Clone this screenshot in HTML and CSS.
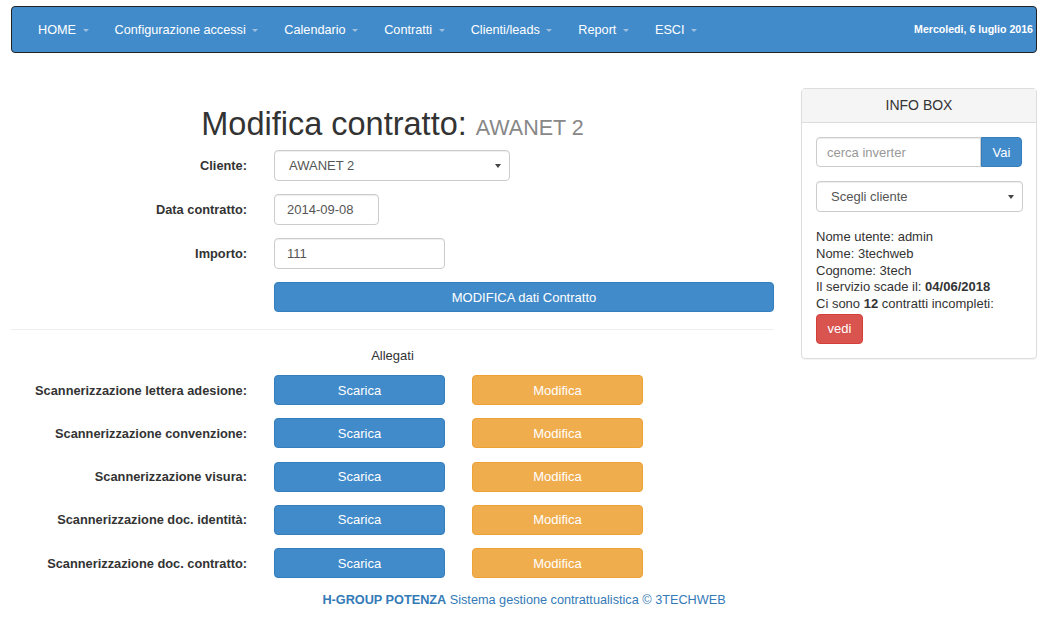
FILE: index.html
```html
<!DOCTYPE html>
<html lang="it">
<head>
<meta charset="utf-8">
<title>Modifica contratto</title>
<link rel="stylesheet" href="styles.css">
</head>
<body>
<nav class="navbar">
  <ul class="nav">
    <li><a href="#">HOME <span class="caret"></span></a></li>
    <li><a href="#">Configurazione accessi <span class="caret"></span></a></li>
    <li><a href="#">Calendario <span class="caret"></span></a></li>
    <li><a href="#">Contratti <span class="caret"></span></a></li>
    <li><a href="#">Clienti/leads <span class="caret"></span></a></li>
    <li><a href="#">Report <span class="caret"></span></a></li>
    <li><a href="#">ESCI <span class="caret"></span></a></li>
  </ul>
  <div class="date">Mercoledi, 6 luglio 2016</div>
</nav>

<div class="page">
  <main class="main">
    <h1 class="title">Modifica contratto: <small>AWANET 2</small></h1>
    <form class="form">
      <div class="row">
        <label class="lbl">Cliente:</label>
        <div class="ctl"><div class="select w-client">AWANET 2<span class="arrow"></span></div></div>
      </div>
      <div class="row">
        <label class="lbl">Data contratto:</label>
        <div class="ctl"><div class="input w-date">2014-09-08</div></div>
      </div>
      <div class="row">
        <label class="lbl">Importo:</label>
        <div class="ctl"><div class="input w-imp">111</div></div>
      </div>
      <div class="row">
        <div class="lbl"></div>
        <div class="ctl"><button type="button" class="btn btn-primary w-full">MODIFICA dati Contratto</button></div>
      </div>
    </form>
    <hr class="sep">
    <div class="allegati">Allegati</div>
    <div class="att">
      <div class="arow"><span class="lbl">Scannerizzazione lettera adesione:</span><button class="btn btn-primary w-att">Scarica</button><button class="btn btn-warning w-att">Modifica</button></div>
      <div class="arow"><span class="lbl">Scannerizzazione convenzione:</span><button class="btn btn-primary w-att">Scarica</button><button class="btn btn-warning w-att">Modifica</button></div>
      <div class="arow"><span class="lbl">Scannerizzazione visura:</span><button class="btn btn-primary w-att">Scarica</button><button class="btn btn-warning w-att">Modifica</button></div>
      <div class="arow"><span class="lbl">Scannerizzazione doc. identità:</span><button class="btn btn-primary w-att">Scarica</button><button class="btn btn-warning w-att">Modifica</button></div>
      <div class="arow"><span class="lbl">Scannerizzazione doc. contratto:</span><button class="btn btn-primary w-att">Scarica</button><button class="btn btn-warning w-att">Modifica</button></div>
    </div>
  </main>

  <aside class="panel">
    <div class="panel-heading">INFO BOX</div>
    <div class="panel-body">
      <div class="input-group">
        <div class="input ig-input placeholder">cerca inverter</div>
        <button class="btn btn-primary ig-btn">Vai</button>
      </div>
      <div class="select w-side">Scegli cliente<span class="arrow"></span></div>
      <div class="info">
        <div>Nome utente: admin</div>
        <div>Nome: 3techweb</div>
        <div>Cognome: 3tech</div>
        <div>Il servizio scade il: <b>04/06/2018</b></div>
        <div>Ci sono <b>12</b> contratti incompleti:</div>
      </div>
      <button class="btn btn-danger">vedi</button>
    </div>
  </aside>
</div>

<footer class="footer"><b>H-GROUP POTENZA</b> Sistema gestione contrattualistica © 3TECHWEB</footer>
</body>
</html>
```

FILE: styles.css
```css
* { box-sizing: border-box; }
body {
  margin: 0;
  font-family: "Liberation Sans", Arial, sans-serif;
  font-size: 13px;
  color: #333;
  background: #fff;
}

/* navbar */
.navbar {
  margin: 6px 25px 0 11px;
  height: 47px;
  background: #428bca;
  border: 1px solid #222;
  border-radius: 4px;
  display: flex;
  align-items: center;
  justify-content: space-between;
  padding: 0 3px 0 13px;
}
.nav {
  list-style: none;
  margin: 0;
  padding: 0;
  display: flex;
}
.nav a {
  display: block;
  padding: 0 13px;
  color: #fff;
  text-decoration: none;
  font-size: 12.7px;
  line-height: 44px;
}
.caret {
  display: inline-block;
  width: 0;
  height: 0;
  margin-left: 3px;
  vertical-align: middle;
  border-top: 3px solid #9dbfe0;
  border-left: 3px solid transparent;
  border-right: 3px solid transparent;
}
.date {
  color: #fff;
  font-weight: bold;
  font-size: 10.6px;
  padding-bottom: 2px;
}

/* layout */
.page {
  display: flex;
  align-items: flex-start;
  gap: 27px;
  margin: 0 25px 0 11px;
}
.main {
  width: 763px;
}
.title {
  margin: 53px 0 4px;
  text-align: center;
  font-weight: normal;
  font-size: 32.5px;
  line-height: 36px;
  color: #333;
}
.title small {
  font-size: 21.5px;
  color: #888;
}

/* form */
.row {
  display: flex;
  align-items: center;
  gap: 27px;
  margin-bottom: 13px;
}
.lbl {
  width: 236px;
  flex: none;
  text-align: right;
  font-weight: bold;
  font-size: 12.8px;
}
.ctl { flex: 1; }
.input, .select {
  height: 31px;
  border: 1px solid #ccc;
  border-radius: 4px;
  padding: 0 12px;
  display: flex;
  align-items: center;
  font-size: 13px;
  color: #555;
  background: #fff;
  box-shadow: inset 0 1px 1px rgba(0,0,0,.075);
}
.select {
  position: relative;
  padding-left: 14px;
}
.arrow {
  position: absolute;
  right: 8px;
  top: 13px;
  border-top: 4px solid #444;
  border-left: 3px solid transparent;
  border-right: 3px solid transparent;
}
.w-client { width: 236px; }
.w-date { width: 105px; }
.w-imp { width: 171px; }
.w-full { width: 500px; height: 30px; }

.btn {
  height: 30px;
  border: 1px solid transparent;
  border-radius: 4px;
  color: #fff;
  font-family: inherit;
  font-size: 13px;
  padding: 0 12px;
  cursor: pointer;
}
.btn-primary { background: #428bca; border-color: #357ebd; }
.btn-warning { background: #f0ad4e; border-color: #eea236; }
.btn-danger { background: #d9534f; border-color: #d43f3a; }

.sep {
  border: 0;
  border-top: 1px solid #eee;
  margin: 17px 0 18px;
}
.allegati {
  text-align: center;
  font-size: 13px;
  margin-bottom: 12px;
}
.arow {
  display: flex;
  align-items: center;
  gap: 27px;
  margin-bottom: 13.3px;
}
.w-att { width: 171px; }

/* panel */
.panel {
  width: 236px;
  margin-top: 35px;
  border: 1px solid #ddd;
  border-radius: 4px;
  box-shadow: 0 1px 1px rgba(0,0,0,.05);
}
.panel-heading {
  background: #f5f5f5;
  border-bottom: 1px solid #ddd;
  height: 34px;
  line-height: 33px;
  text-align: center;
  font-size: 14px;
  color: #333;
}
.panel-body {
  padding: 14px 14px 14px;
}
.input-group {
  display: flex;
  height: 30px;
}
.ig-input {
  flex: 1;
  height: 30px;
  border-radius: 4px 0 0 4px;
  padding-left: 10px;
}
.placeholder { color: #999; }
.ig-btn {
  width: 41px;
  border-radius: 0 4px 4px 0;
  padding: 0;
}
.w-side {
  width: 207px;
  margin-top: 14px;
  color: #555;
}
.info {
  margin-top: 17px;
  line-height: 16.8px;
  font-size: 13px;
  color: #333;
}
.info b { color: #333; }
.btn-danger {
  margin-top: 1px;
  width: 47px;
  padding: 0;
}

/* footer */
.footer {
  margin: 2px 25px 0 11px;
  text-align: center;
  color: #337ab7;
  font-size: 12.7px;
}
```
